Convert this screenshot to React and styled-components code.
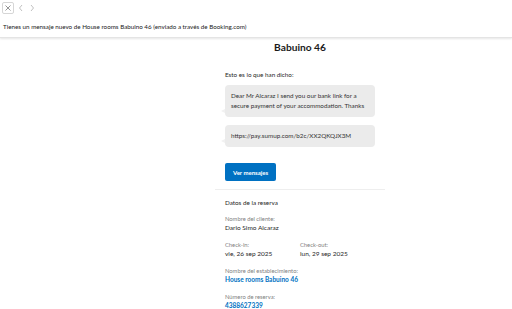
import React from "react"
import styled, { createGlobalStyle } from "styled-components"

const GlobalStyle = createGlobalStyle`
  html, body {
    margin: 0;
    padding: 0;
    background: #ffffff;
    font-family: Lato, "Noto Sans", sans-serif;
    color: #262626;
  }
`

const Page = styled.div`
  width: 512px;
  height: 309px;
  overflow: hidden;
  display: flex;
  flex-direction: column;
`

const TopBar = styled.div`
  flex-shrink: 0;
  height: 38px;
  box-shadow: 0 1px 2px rgba(0, 0, 0, 0.1);
  border-bottom: 1px solid #e4e4e4;
  box-sizing: border-box;
  display: flex;
  flex-direction: column;
  padding: 2px 0 0 2px;
`

const Toolbar = styled.div`
  display: flex;
  align-items: center;
  gap: 2px;
  height: 11px;
`

const IconButton = styled.div`
  width: ${(p) => (p.$boxed ? "10px" : "9px")};
  height: ${(p) => (p.$boxed ? "10px" : "8px")};
  border: ${(p) => (p.$boxed ? "1px solid #d6d6d6" : "none")};
  border-radius: 2px;
  display: flex;
  align-items: center;
  justify-content: center;
`

const Subject = styled.div`
  font-size: 6.25px;
  margin-top: 10px;
  padding-left: 1px;
  white-space: nowrap;
  color: #1a1a1a;
`

const Body = styled.div`
  display: flex;
  flex-direction: column;
  padding-left: 215px;
`

const Heading = styled.h1`
  width: 170px;
  margin: 2px 0 0;
  text-align: center;
  font-size: 10.2px;
  line-height: 14px;
  font-weight: 700;
  color: #1a1a1a;
`

const Column = styled.div`
  width: 170px;
  display: flex;
  flex-direction: column;
`

const Inner = styled.div`
  padding: 0 10px;
  display: flex;
  flex-direction: column;
`

const Intro = styled.div`
  font-size: 6.3px;
  line-height: 10px;
  margin-top: 16px;
  color: #1f1f1f;
`

const Bubble = styled.div`
  position: relative;
  background: #ebebeb;
  border-radius: 4px;
  margin-top: ${(p) => p.$top || "4px"};
  padding: 6px 6px;
  font-size: 6.3px;
  line-height: 10px;
  color: #333333;
  &::before {
    content: "";
    position: absolute;
    left: -4px;
    bottom: 4px;
    border-top: 2px solid transparent;
    border-bottom: 2px solid transparent;
    border-right: 4px solid #f1f1f1;
  }
`

const Button = styled.div`
  align-self: flex-start;
  margin-top: 16px;
  width: 51px;
  height: 18px;
  background: #0071c2;
  border-radius: 2px;
  color: #ffffff;
  font-size: 6px;
  font-weight: 700;
  display: flex;
  align-items: center;
  justify-content: center;
`

const Divider = styled.div`
  height: 1px;
  background: #eeeeee;
  margin-top: 8px;
`

const Section = styled.div`
  padding: 8px 10px 0;
  display: flex;
  flex-direction: column;
`

const SectionTitle = styled.div`
  font-size: 6.3px;
  line-height: 10px;
  color: #262626;
  margin-bottom: 6px;
`

const Row = styled.div`
  display: flex;
  margin-bottom: 7px;
`

const Field = styled.div`
  width: ${(p) => p.$width || "auto"};
  display: flex;
  flex-direction: column;
`

const Label = styled.div`
  font-size: 5.8px;
  line-height: 9px;
  color: #808080;
`

const Value = styled.div`
  font-size: 6.5px;
  line-height: 10px;
  color: ${(p) => (p.$link ? "#0071c2" : "#1f1f1f")};
  font-weight: ${(p) => (p.$link ? 700 : 400)};
`

const CloseIcon = () => (
  <svg width="6" height="6" viewBox="0 0 6 6">
    <path d="M0.5 0.5 L5.5 5.5 M5.5 0.5 L0.5 5.5" stroke="#7a7a7a" strokeWidth="0.8" fill="none" />
  </svg>
)

const Chevron = ({ dir }) => (
  <svg width="6" height="8" viewBox="0 0 6 8">
    <path
      d={dir === "left" ? "M4 1 L1.5 4 L4 7" : "M2 1 L4.5 4 L2 7"}
      stroke="#b0b0b0"
      strokeWidth="0.8"
      fill="none"
    />
  </svg>
)

const App = () => {
  return (
    <Page>
      <GlobalStyle />
      <TopBar>
        <Toolbar>
          <IconButton $boxed>
            <CloseIcon />
          </IconButton>
          <IconButton>
            <Chevron dir="left" />
          </IconButton>
          <IconButton>
            <Chevron dir="right" />
          </IconButton>
        </Toolbar>
        <Subject>
          Tienes un mensaje nuevo de House rooms Babuino 46 (enviado a través de Booking.com)
        </Subject>
      </TopBar>
      <Body>
        <Heading>Babuino 46</Heading>
        <Column>
          <Inner>
            <Intro>Esto es lo que han dicho:</Intro>
            <Bubble $top="5px">
              Dear Mr Alcaraz I send you our bank link for a secure payment of your accommodation. Thanks
            </Bubble>
            <Bubble $top="8px">https://pay.sumup.com/b2c/XX2QKQJX3M</Bubble>
            <Button>Ver mensajes</Button>
          </Inner>
          <Divider />
          <Section>
            <SectionTitle>Datos de la reserva</SectionTitle>
            <Row>
              <Field>
                <Label>Nombre del cliente:</Label>
                <Value>Dario Simo Alcaraz</Value>
              </Field>
            </Row>
            <Row>
              <Field $width="75px">
                <Label>Check-in:</Label>
                <Value>vie, 26 sep 2025</Value>
              </Field>
              <Field>
                <Label>Check-out:</Label>
                <Value>lun, 29 sep 2025</Value>
              </Field>
            </Row>
            <Row>
              <Field>
                <Label>Nombre del establecimiento:</Label>
                <Value $link>House rooms Babuino 46</Value>
              </Field>
            </Row>
            <Row>
              <Field>
                <Label>Número de reserva:</Label>
                <Value $link>4388627339</Value>
              </Field>
            </Row>
          </Section>
        </Column>
      </Body>
    </Page>
  )
}

export default App
